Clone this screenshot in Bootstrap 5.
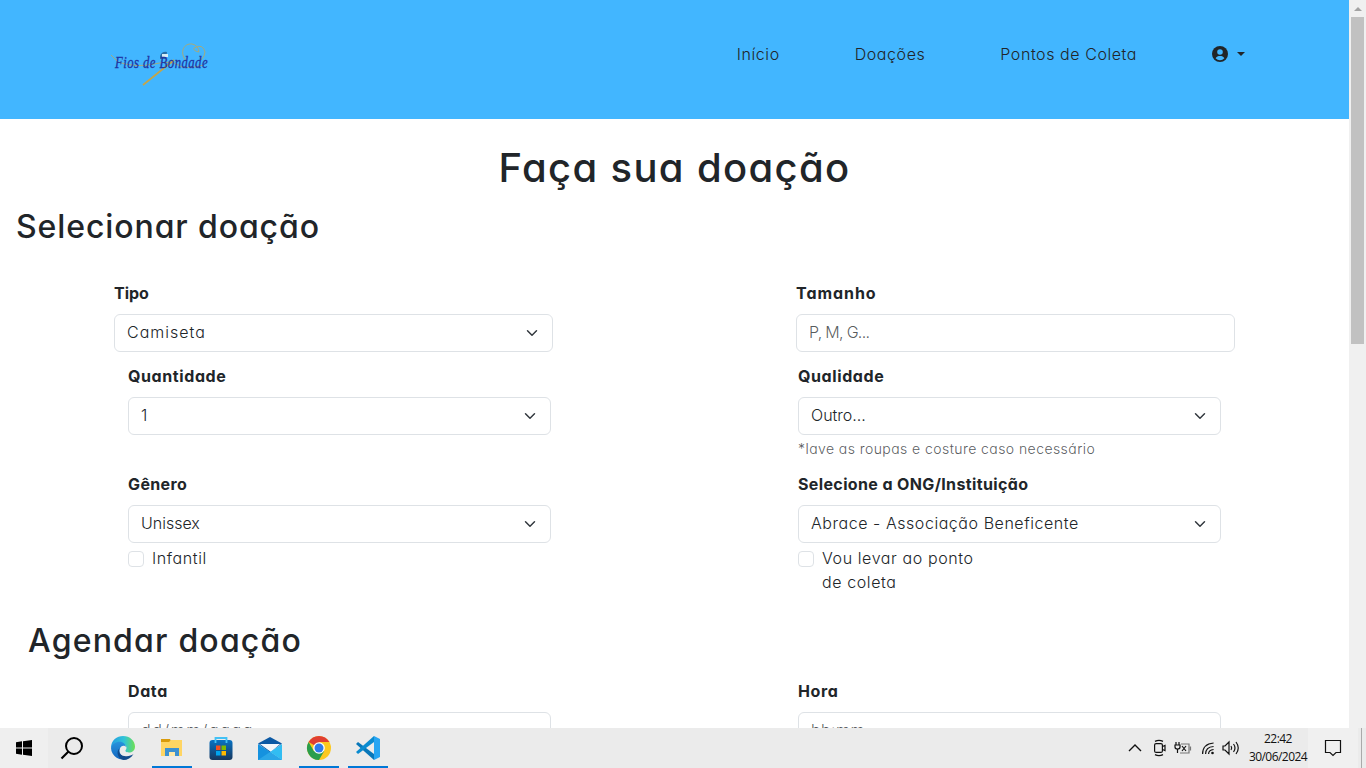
<!DOCTYPE html>
<html lang="pt-BR">
<head>
<meta charset="utf-8">
<meta name="viewport" content="width=device-width, initial-scale=1">
<title>Fios de Bondade</title>
<link href="https://cdn.jsdelivr.net/npm/bootstrap@5.3.0/dist/css/bootstrap.min.css" rel="stylesheet">
<style>
  body { font-family: Inter, "Open Sans", sans-serif; font-weight: 300; font-feature-settings: "cv11"; letter-spacing: .6px; height: 768px; overflow: hidden; }
  .form-control, .form-select { font-weight: 300; letter-spacing: .55px; padding: 5px 12px 7px; height: 38px; font-feature-settings: "cv11"; }
  .page-area { width: 1349px; height: 728px; overflow: hidden; }
  .site-header { background: #42b6ff; height: 119px; padding: 34px 96px 0 114px; }
  .site-nav { gap: 75px; margin-right: 8px; margin-top: 8px; }
  .site-nav a { color: #212529; text-decoration: none; white-space: nowrap; letter-spacing: .57px; }
  .site-nav .dropdown-toggle::after { margin-left: 9px; vertical-align: 0; }
  h1, h2 { font-weight: 450; line-height: 1.2; margin: 0; white-space: nowrap; }
  h1 { font-size: 40px; letter-spacing: 1.35px; padding-top: 25px; }
  h2 { font-size: 32px; letter-spacing: .9px; }
  .pick-title { padding: 16px 0 0 16px; }
  .plan-title { padding: 27px 0 0 28px; letter-spacing: 1.2px; }
  .form-label { display: block; font-weight: 700; line-height: 24px; margin-bottom: 9px; white-space: nowrap; }
  .outer-row { padding: 35px 114px 0; }
  .outer-row > div { width: 439px; }
  .inner-row { padding: 0 128px; }
  .inner-row > div { width: 423px; }
  .date-row { padding-top: 18px; }
  .form-text { font-size: 14px; line-height: 21px; margin: 3px 0 1px; letter-spacing: .43px; white-space: nowrap; }
  .form-check { margin: 3px 0 1px; min-height: 24px; width: 190px; line-height: 24px; }
  .form-check-input { margin-top: 5px; }
  .ls-0 { letter-spacing: 0; } .ls-3 { letter-spacing: .37px; } .ls-9 { letter-spacing: .95px; }
  .ls-c { letter-spacing: 1px; } .ls-n { letter-spacing: -.7px; } .ls-d { letter-spacing: 1.6px; }
  .scroll-rail { width: 17px; background: #f0f0f0; }
  .scroll-thumb { width: 13px; height: 327px; background: #c1c1c1; }
  .taskbar { height: 40px; background: #ebebeb; letter-spacing: 0; }
  .task-apps { gap: 9px; margin-left: 7px; }
  .task-app { width: 40px; height: 40px; border-bottom: 2px solid transparent; padding-top: 2px; }
  .task-app.running { border-color: #0078d7; }
  .task-start { width: 48px; height: 40px; background: #efefef; }
  .clock { font: 12px/18px "Open Sans", sans-serif; width: 60px; letter-spacing: -.55px; color: #111; }
  .task-note { width: 50px; background: #f0f0f0; height: 40px; }
  .show-desktop { width: 5px; height: 40px; margin-left: 3px; border-left: 1px solid #aaa; }
  svg { display: block; overflow: visible; }
</style>
</head>
<body class="d-flex flex-column bg-white">
<div class="d-flex">
  <div class="page-area">
    <header class="site-header d-flex justify-content-between align-items-start">
      <svg width="110" height="56" viewBox="0 0 110 56">
        <g fill="none" stroke="#a5aa7c" stroke-width="1">
          <path d="M-3 21 4 28Q22 34 40 30T64 31 90 31"/>
          <path d="M72 27C65 18 70 9 78 10q6 1 7 8-6-1-5-4 9-5 11 4 0 4-4 8"/>
          <path d="M29 51 60 26" stroke="#c5a549" stroke-width="1.700"/>
        </g>
        <path d="M46 22q2-5 7-4l-1 7h-6z" fill="#286fa8"/><path d="M48 20h6v3h-6z" fill="#d6edf5"/>
        <text x="1" y="34" textLength="93" lengthAdjust="spacingAndGlyphs" font-family="Liberation Serif, serif" font-size="17" font-style="italic" fill="#1f35a3" stroke="#1f35a3" stroke-width=".3">Fios de Bondade</text>
      </svg>
      <nav class="site-nav d-flex">
        <a href="#" class="ls-3">Início</a>
        <a href="#">Doações</a>
        <a href="#">Pontos de Coleta</a>
        <a href="#" class="dropdown-toggle d-flex align-items-center" aria-label="Conta">
          <svg width="16" height="16" viewBox="0 0 16 16"><circle cx="8" cy="8" r="8" fill="#212529"/><path fill="#42b6ff" fill-rule="evenodd" d="M8 3.200a2.800 2.800 0 1 1 0 5.600 2.800 2.800 0 0 1 0-5.600zM3.600 12.300C4.500 10.700 6 10.100 8 10.100s3.500.6 4.400 2.200C11.200 13.600 9.700 14.200 8 14.200s-3.200-.6-4.400-1.900z"/></svg>
        </a>
      </nav>
    </header>
    <main>
      <h1 class="text-center">Faça sua doação</h1>
      <h2 class="pick-title">Selecionar doação</h2>
      <div class="outer-row d-flex justify-content-between">
        <div><label class="form-label ls-0" for="tipo">Tipo</label>
          <select id="tipo" class="form-select ls-c"><option>Camiseta</option></select></div>
        <div><label class="form-label ls-9" for="tam">Tamanho</label>
          <input id="tam" class="form-control ls-n" placeholder="P, M, G..."></div>
      </div>
      <div class="inner-row d-flex justify-content-between mt-2 pt-1">
        <div><label class="form-label" for="qtd">Quantidade</label>
          <select id="qtd" class="form-select"><option>1</option></select></div>
        <div><label class="form-label" for="qual">Qualidade</label>
          <select id="qual" class="form-select ls-0"><option>Outro...</option></select>
          <div class="form-text">*lave as roupas e costure caso necessário</div></div>
      </div>
      <div class="inner-row d-flex justify-content-between mt-2 pt-1">
        <div><label class="form-label ls-3" for="gen">Gênero</label>
          <select id="gen" class="form-select ls-0"><option>Unissex</option></select>
          <div class="form-check"><input class="form-check-input" type="checkbox" id="inf"><label for="inf">Infantil</label></div></div>
        <div><label class="form-label ls-3" for="ong">Selecione a ONG/Instituição</label>
          <select id="ong" class="form-select"><option>Abrace - Associação Beneficente</option></select>
          <div class="form-check"><input class="form-check-input" type="checkbox" id="levar"><label for="levar">Vou levar ao ponto de coleta</label></div></div>
      </div>
      <h2 class="plan-title">Agendar doação</h2>
      <div class="inner-row date-row d-flex justify-content-between">
        <div><label class="form-label" for="data">Data</label>
          <input id="data" class="form-control ls-d" placeholder="dd/mm/aaaa"></div>
        <div><label class="form-label" for="hora">Hora</label>
          <input id="hora" class="form-control" placeholder="hh:mm"></div>
      </div>
    </main>
  </div>
  <div class="scroll-rail d-flex flex-column align-items-center">
    <svg width="17" height="17"><path d="M5 11 9 7l4 4z" fill="#a3a3a3"/></svg>
    <div class="scroll-thumb"></div>
  </div>
</div>
<footer class="taskbar d-flex align-items-center">
  <div class="task-start d-flex align-items-center justify-content-center">
    <svg width="16" height="16" viewBox="0 0 16 16"><path d="M0 2.200 6 1.300v6.200H0zM7 1.200 16 0v7.500H7zM0 8.500h6v6.200l-6-.9zM7 8.500h9V16l-9-1.200z"/></svg>
  </div>
  <div class="task-start bg-transparent d-flex align-items-center justify-content-center">
    <svg width="24" height="24" viewBox="0 0 24 24" fill="none" stroke="#000" stroke-width="2"><circle cx="14" cy="10" r="8"/><path d="M8.500 15.500 1.500 22.500" stroke-width="2.200"/></svg>
  </div>
  <div class="task-apps d-flex">
    <div class="task-app d-flex justify-content-center align-items-center">
      <svg width="24" height="24" viewBox="0 0 24 24"><defs><linearGradient id="ea" x1="0" x2="1"><stop stop-color="#239ce0"/><stop offset=".55" stop-color="#31c3d8"/><stop offset="1" stop-color="#6ee052"/></linearGradient><linearGradient id="eb" x2="0" y2="1"><stop stop-color="#2792dc"/><stop offset="1" stop-color="#1266bf"/></linearGradient></defs>
      <path d="M0 12C0 4 6 0 12 0c7 0 12 5 12 10.500 0 4-3 6-6 6-3.500 0-4-1.500-3.300-2.400C17 11 14 7.700 10 7.700 5.500 7.700 2 10 0 12z" fill="url(#ea)"/>
      <path d="M0 12C1 8 5 5.700 8.500 5.700c4 0 6.500 3 6.300 5.300-1-2-5-2-6 2-1.500 6 5 9.500 8 9.500A12 12 0 0 1 0 12z" fill="url(#eb)"/>
      <path d="M8.500 12.500c-2 5 2.500 8 7 7.700 3 0 5-.8 7-2.200C20 22 16.500 24 12.500 24 7 23 4.500 15.500 8.500 12.500z" fill="#114a8b"/></svg>
    </div>
    <div class="task-app running d-flex justify-content-center align-items-center">
      <svg width="22" height="20" viewBox="0 0 22 20"><path d="M0 1h9l1 2v4H0z" fill="#d99b0b"/><path d="M0 4h8l2-2h11v16H0z" fill="#ffd563"/><path d="M4 10h14v8h-4v-4H8v4H4z" fill="#3d91d1"/><path d="M8 14h6v4H8z" fill="#ffe9a7"/></svg>
    </div>
    <div class="task-app d-flex justify-content-center align-items-center">
      <svg width="24" height="24" viewBox="0 0 24 24"><defs><linearGradient id="st" x2="0" y2="1"><stop stop-color="#0873c4"/><stop offset="1" stop-color="#17375e"/></linearGradient></defs><rect x=".5" y="4" width="23" height="20" rx="3" fill="url(#st)"/><path d="M6.500 7V2h11v5" fill="none" stroke="#42c1f5" stroke-width="1.800"/><path d="M7 9.500h4.500V14H7z" fill="#f25022"/><path d="M12.500 9.500H17V14h-4.500z" fill="#7fba00"/><path d="M7 15h4.500v4.500H7z" fill="#00a4ef"/><path d="M12.500 15H17v4.500h-4.500z" fill="#ffb900"/></svg>
    </div>
    <div class="task-app d-flex justify-content-center align-items-center">
      <svg width="24" height="23" viewBox="0 0 24 23"><path d="M0 6.500 12 0l12 6.500-12 9z" fill="#0c59a4"/><path d="M2 7h20l-9 8z" fill="#f3f7fb"/><path d="M0 7l24 16H0z" fill="#1592df"/><path d="M24 7v16L12 15z" fill="#32bdf2"/><path d="M0 23 12 15l12 8z" fill="#2aa6e7"/></svg>
    </div>
    <div class="task-app running d-flex justify-content-center align-items-center">
      <svg width="24" height="24" viewBox="0 0 24 24"><circle cx="12" cy="12" r="12" fill="#fcc81f"/><path d="M12 12 1.600 6A12 12 0 0 1 22.400 6H12z" fill="#e03e32"/><path d="M1.600 6A12 12 0 0 0 12 24l5.200-9L12 12 6.800 15z" fill="#2a9d4c"/><circle cx="12" cy="12" r="5.800" fill="#fff"/><circle cx="12" cy="12" r="4.500" fill="#2f7aeb"/></svg>
    </div>
    <div class="task-app running d-flex justify-content-center align-items-center">
      <svg width="24" height="24" viewBox="0 0 24 24"><path d="M0 8 2 6 18 18v6z" fill="#0877b9"/><path d="M0 16 2 18 18 6V0z" fill="#0a8bd0"/><path d="M18 0l6 3v18l-6 3z" fill="#27a5f2"/></svg>
    </div>
  </div>
  <div class="d-flex align-items-center ms-auto">
    <svg width="124" height="40" viewBox="0 0 124 40" fill="none" stroke="#111" stroke-width="1.200">
      <path d="m5 23 6-6 6 6" stroke-width="1.400"/>
      <rect x="30.600" y="15.600" width="7.800" height="8.800" rx="1.500"/><path d="m38.500 18.500 2.500-1v5l-2.500-1M31 13.400q4-2 8 0M31 26.600q4 2 8 0"/>
      <path d="M52 14v3m3-3v3m-4 0h5v2q0 2-2.500 2T51 19zM53.500 21v4"/><path d="M57 16h8v9h-9M66.500 18.500v4" stroke="#777"/><path d="m58 18 4 5m0-5-4 5"/>
      <path d="M78.600 26q0-10 11-11M81.600 26q0-7 8-7.500M84.600 26q0-4 5-4.500"/><circle cx="88.500" cy="25" r="1.300" fill="#111" stroke="none"/>
      <path d="M99 18h2l4-4v12l-4-4h-2zM107 18q1.500 2 0 4M109.500 16q3 4 0 8M112 14q4.500 6 0 12"/>
    </svg>
    <div class="clock text-center">22:42<br>30/06/2024</div>
    <div class="task-note d-flex align-items-center justify-content-center">
      <svg width="18" height="18" viewBox="0 0 18 18" fill="none" stroke="#111" stroke-width="1.200"><path d="M1.500 1.500h15v12h-4.500l-3 3-3-3H1.500z"/></svg>
    </div>
    <div class="show-desktop"></div>
  </div>
</footer>
<script src="https://cdn.jsdelivr.net/npm/bootstrap@5.3.0/dist/js/bootstrap.bundle.min.js"></script>
</body>
</html>
